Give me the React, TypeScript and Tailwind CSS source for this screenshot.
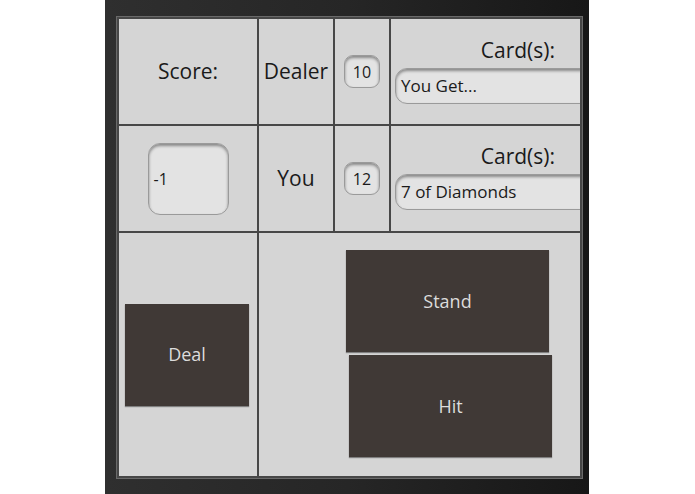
import React from 'react'

const font = { fontFamily: '"Open Sans", "DejaVu Sans", sans-serif' }

function Field({ value, className }: { value: string; className: string }) {
    return (
        <div
            className={`flex items-center bg-[#e3e3e3] border border-[#9a9a9a] shadow-[inset_0_2px_3px_rgba(0,0,0,0.4)] text-[#1a1a1a] ${className}`}
        >
            {value}
        </div>
    )
}

function CardsCell({ value, top }: { value: string; top: string }) {
    return (
        <div className="bg-[#d5d5d5] overflow-hidden flex flex-col">
            <div className={`text-right pr-[25px] text-[21px] leading-none text-[#1a1a1a] ${top}`}>Card(s):</div>
            <Field value={value} className="ml-[4px] mt-[7px] w-[230px] h-[36px] rounded-l-[12px] pl-[5px] text-[17px]" />
        </div>
    )
}

const btn = 'bg-[#403936] text-[#dcdcdc] text-[18px] shadow-[0_1px_1px_rgba(0,0,0,0.4)]'

export default function App() {
    return (
        <div className="min-h-screen bg-white flex" style={font}>
            <div className="ml-[105px] w-[484px] h-[494px] bg-linear-to-r from-[#2f2f2f] via-[#262626] to-[#171717] pl-[12px] pt-[17px]">
                <div className="grid grid-cols-[138px_74px_54px_189px] grid-rows-[105px_105px_243px] gap-[2px] p-[2px] bg-[#474747] w-[465px] shadow-[0_0_0_1px_#6a6a6a]">
                    {/* row 1 */}
                    <div className="bg-[#d5d5d5] flex items-center justify-center text-[21px] text-[#1a1a1a]">Score:</div>
                    <div className="bg-[#d5d5d5] flex items-center justify-center text-[21px] text-[#1a1a1a]">Dealer</div>
                    <div className="bg-[#d5d5d5] flex items-center justify-center">
                        <Field value="10" className="w-[36px] h-[33px] rounded-[9px] justify-center text-[16px]" />
                    </div>
                    <CardsCell value="You Get..." top="pt-[21px]" />

                    {/* row 2 */}
                    <div className="bg-[#d5d5d5] flex items-center justify-center">
                        <Field value="-1" className="w-[81px] h-[72px] rounded-[12px] pl-[5px] text-[16px]" />
                    </div>
                    <div className="bg-[#d5d5d5] flex items-center justify-center text-[21px] text-[#1a1a1a]">You</div>
                    <div className="bg-[#d5d5d5] flex items-center justify-center">
                        <Field value="12" className="w-[36px] h-[33px] rounded-[9px] justify-center text-[16px]" />
                    </div>
                    <CardsCell value="7 of Diamonds" top="pt-[20px]" />

                    {/* row 3 */}
                    <div className="bg-[#d5d5d5] flex items-center pl-[6px]">
                        <button className={`w-[124px] h-[102px] ${btn}`}>Deal</button>
                    </div>
                    <div className="col-span-3 bg-[#d5d5d5] flex flex-col pl-[87px] pt-[17px] gap-[3px]">
                        <button className={`w-[203px] h-[102px] ${btn}`}>Stand</button>
                        <button className={`ml-[3px] w-[203px] h-[102px] ${btn}`}>Hit</button>
                    </div>
                </div>
            </div>
        </div>
    )
}
